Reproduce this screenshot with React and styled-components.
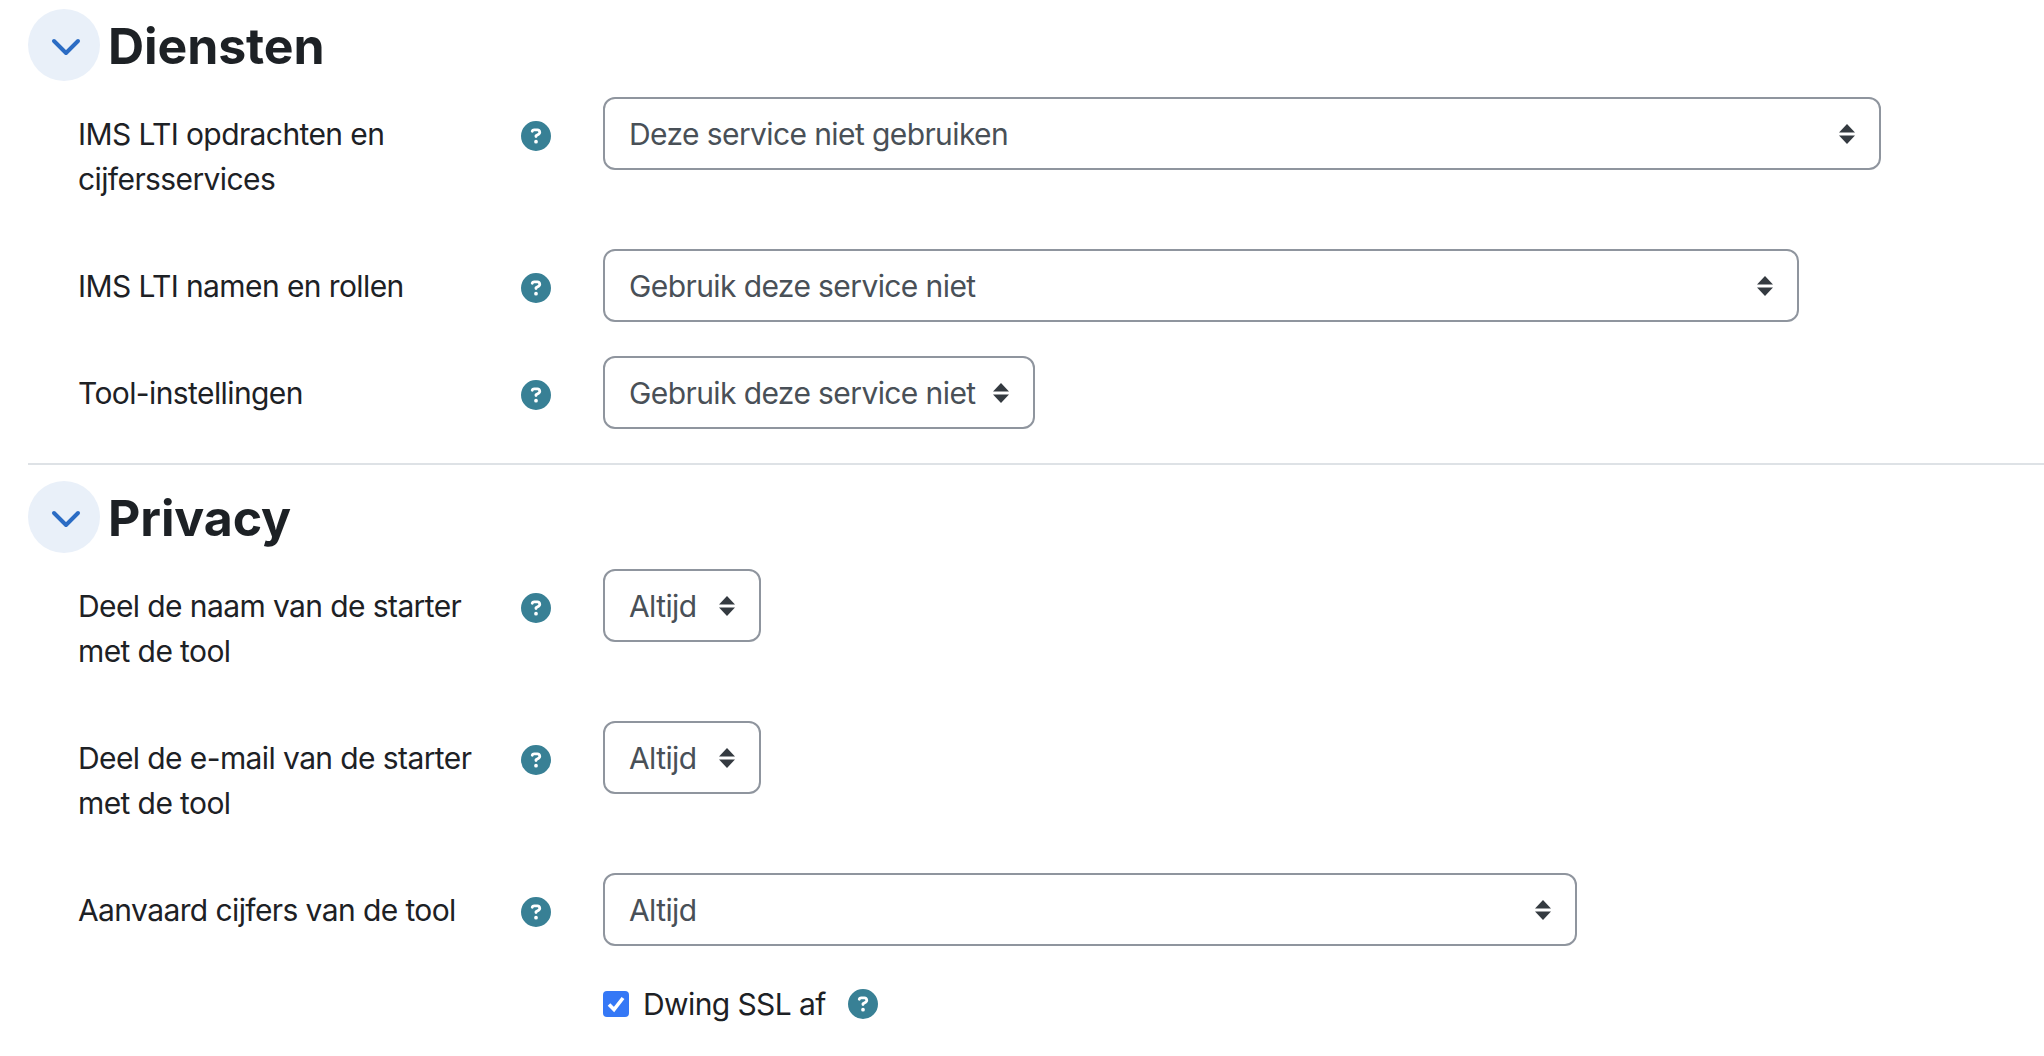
import React from "react";
import styled, { createGlobalStyle } from "styled-components";
import { FaCircleQuestion } from "react-icons/fa6";

const GlobalStyle = createGlobalStyle`
  html, body {
    margin: 0;
    padding: 0;
    background: #fff;
    overflow: hidden;
  }
  body {
    font-family: Inter, "Liberation Sans", sans-serif;
    color: #1d2125;
    letter-spacing: -0.6px;
  }
`;

const Page = styled.div`
  width: 2044px;
  height: 1056px;
  box-sizing: border-box;
  padding: 9px 0 0 28px;
`;

const Section = styled.section`
  & + & {
    border-top: 2px solid #dee2e6;
    padding-top: 16px;
  }
`;

const SectionHeader = styled.div`
  display: flex;
  align-items: center;
  gap: 8px;
  height: 72px;
  margin-bottom: 16px;
`;

const Toggle = styled.span`
  display: flex;
  align-items: center;
  justify-content: center;
  box-sizing: border-box;
  width: 72px;
  height: 72px;
  padding: 4px 0 0 4px;
  border-radius: 50%;
  background: #e9f0f9;
  color: #2b6cc4;
`;

const Title = styled.h3`
  margin: 0;
  padding-top: 2px;
  font-size: 50px;
  font-weight: 700;
  line-height: 72px;
  letter-spacing: -0.1px;
  color: #1d2125;
`;

const Row = styled.div`
  display: grid;
  grid-template-columns: 443px 30px auto;
  justify-content: start;
  margin: 0 0 34px 50px;
`;

const Label = styled.label`
  display: block;
  padding: 15px 12px 13px 0;
  font-size: 30px;
  line-height: 45px;
`;

const HelpIcon = styled(FaCircleQuestion)`
  display: block;
  width: 30px;
  height: 30px;
  color: #388095;
`;

const HelpCell = styled.span`
  padding-top: 24px;
`;

const SelectBox = styled.div`
  display: flex;
  align-items: center;
  justify-content: space-between;
  box-sizing: border-box;
  width: ${(p) => p.$width}px;
  height: 73px;
  margin-left: 52px;
  padding: 0 24px;
  border: 2px solid #8f959e;
  border-radius: 12px;
  font-size: 30px;
  color: #495057;
  background: #fff;
`;

const CheckRow = styled.div`
  display: flex;
  align-items: center;
  height: 30px;
  margin: 43px 0 0 575px;
  font-size: 30px;
`;

const CheckBox = styled.span`
  display: flex;
  align-items: center;
  justify-content: center;
  width: 26px;
  height: 26px;
  margin-right: 14px;
  border-radius: 4px;
  background: #3578f6;
`;

const CheckText = styled.span`
  margin-right: 22px;
`;

const Chevron = () => (
  <svg width="32" height="20" viewBox="0 0 32 20" fill="none">
    <path d="M4 4 L16 16 L28 4" stroke="currentColor" strokeWidth="4" strokeLinecap="round" strokeLinejoin="round" />
  </svg>
);

const Arrows = () => (
  <svg width="16" height="20" viewBox="0 0 16 20" fill="#343a40">
    <path d="M8 0 L16 8.5 L0 8.5 Z" />
    <path d="M0 11.5 L16 11.5 L8 20 Z" />
  </svg>
);

const Tick = () => (
  <svg width="22" height="22" viewBox="0 0 22 22" fill="none">
    <path d="M4 11.5 L9 16.5 L18 5" stroke="#fff" strokeWidth="3.6" />
  </svg>
);

const Field = ({ label, value, width }) => (
  <Row>
    <Label>{label}</Label>
    <HelpCell>
      <HelpIcon />
    </HelpCell>
    <SelectBox $width={width}>
      <span>{value}</span>
      <Arrows />
    </SelectBox>
  </Row>
);

const Header = ({ title }) => (
  <SectionHeader>
    <Toggle>
      <Chevron />
    </Toggle>
    <Title>{title}</Title>
  </SectionHeader>
);

export default function App() {
  return (
    <Page>
      <GlobalStyle />
      <Section>
        <Header title="Diensten" />
        <Field label="IMS LTI opdrachten en cijfersservices" value="Deze service niet gebruiken" width={1278} />
        <Field label="IMS LTI namen en rollen" value="Gebruik deze service niet" width={1196} />
        <Field label="Tool-instellingen" value="Gebruik deze service niet" width={432} />
      </Section>
      <Section>
        <Header title="Privacy" />
        <Field label="Deel de naam van de starter met de tool" value="Altijd" width={158} />
        <Field label="Deel de e-mail van de starter met de tool" value="Altijd" width={158} />
        <Field label="Aanvaard cijfers van de tool" value="Altijd" width={974} />
        <CheckRow>
          <CheckBox>
            <Tick />
          </CheckBox>
          <CheckText>Dwing SSL af</CheckText>
          <HelpIcon />
        </CheckRow>
      </Section>
    </Page>
  );
}
